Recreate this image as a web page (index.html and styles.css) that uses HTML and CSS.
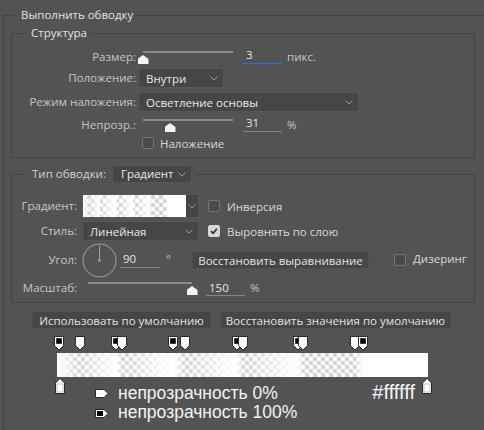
FILE: index.html
```html
<!DOCTYPE html>
<html lang="ru">
<head>
<meta charset="utf-8">
<title>Выполнить обводку</title>
<link rel="stylesheet" href="styles.css">
</head>
<body>
<fieldset class="outer">
  <legend class="outer-legend">Выполнить обводку</legend>

  <fieldset class="group group-structure">
    <legend class="group-legend">Структура</legend>

    <div class="row row-slider r1">
      <span class="lbl lbl-a">Размер:</span>
      <div class="slider slider-a"><span class="thumb" style="left:0%"></span></div>
      <span class="num num-a focused">3</span>
      <span class="unit">пикс.</span>
    </div>

    <div class="row row-select r2">
      <span class="lbl lbl-a">Положение:</span>
      <div class="select sel-pos"><span class="sel-text">Внутри</span><svg class="chev" viewBox="0 0 8 5"><polyline points="0.5,0.5 4,4 7.5,0.5"/></svg></div>
    </div>

    <div class="row row-select r3">
      <span class="lbl lbl-a">Режим наложения:</span>
      <div class="select sel-mode"><span class="sel-text">Осветление основы</span><svg class="chev" viewBox="0 0 8 5"><polyline points="0.5,0.5 4,4 7.5,0.5"/></svg></div>
    </div>

    <div class="row row-slider r4">
      <span class="lbl lbl-a">Непрозр.:</span>
      <div class="slider slider-a"><span class="thumb" style="left:30%"></span></div>
      <span class="num num-a">31</span>
      <span class="unit">%</span>
    </div>

    <div class="row row-check r5">
      <span class="lbl lbl-a"></span>
      <span class="check ck-overlay"></span>
      <span class="check-text">Наложение</span>
    </div>
  </fieldset>

  <fieldset class="group group-fill">
    <legend class="group-legend legend-fill">
      <span class="lbl-legend">Тип обводки:</span>
      <span class="select sel-type"><span class="sel-text">Градиент</span><svg class="chev" viewBox="0 0 8 5"><polyline points="0.5,0.5 4,4 7.5,0.5"/></svg></span>
    </legend>

    <div class="row row-grad">
      <span class="lbl lbl-b">Градиент:</span>
      <div class="select sel-grad"><span class="swatch grad-fill"></span><span class="swatch-btn"><svg class="chev" viewBox="0 0 8 5"><polyline points="0.5,0.5 4,4 7.5,0.5"/></svg></span></div>
      <span class="check ck-b"></span>
      <span class="check-text">Инверсия</span>
    </div>

    <div class="row row-style">
      <span class="lbl lbl-b">Стиль:</span>
      <div class="select sel-style"><span class="sel-text">Линейная</span><svg class="chev" viewBox="0 0 8 5"><polyline points="0.5,0.5 4,4 7.5,0.5"/></svg></div>
      <span class="check ck-b checked"><svg viewBox="0 0 12 12"><polyline points="2.5,6.2 5,8.7 9.5,3.2"/></svg></span>
      <span class="check-text">Выровнять по слою</span>
    </div>

    <div class="row row-angle">
      <span class="lbl lbl-b">Угол:</span>
      <svg class="dial" viewBox="0 0 35 35"><circle cx="17.5" cy="17.5" r="16.5"/><line x1="17.5" y1="17.5" x2="17.5" y2="2.5"/><circle class="dot" cx="17.5" cy="17.5" r="1.3"/></svg>
      <span class="num num-angle">90</span>
      <span class="deg">°</span>
      <span class="btn btn-align">Восстановить выравнивание</span>
      <span class="check ck-dither"></span>
      <span class="check-text">Дизеринг</span>
    </div>

    <div class="row row-slider row-scale">
      <span class="lbl lbl-b">Масштаб:</span>
      <div class="slider slider-b"><span class="thumb" style="left:100%"></span></div>
      <span class="num num-b">150</span>
      <span class="unit">%</span>
    </div>
  </fieldset>

  <div class="btn-row">
    <span class="btn btn-default">Использовать по умолчанию</span>
    <span class="btn btn-reset">Восстановить значения по умолчанию</span>
  </div>

  <div class="editor">
    <div class="stops-top">
      <svg class="stop-o black" style="left:-3px" viewBox="0 0 10 15"><path d="M0.5 0.5H9.5V9.5L5 14L0.5 9.5Z"/><rect x="2.2" y="2.2" width="5.6" height="5.6"/></svg>
      <svg class="stop-o" style="left:18px" viewBox="0 0 10 15"><path d="M0.5 0.5H9.5V9.5L5 14L0.5 9.5Z"/></svg>
      <svg class="stop-o black" style="left:54px" viewBox="0 0 10 15"><path d="M0.5 0.5H9.5V9.5L5 14L0.5 9.5Z"/><rect x="2.2" y="2.2" width="5.6" height="5.6"/></svg>
      <svg class="stop-o" style="left:60px" viewBox="0 0 10 15"><path d="M0.5 0.5H9.5V9.5L5 14L0.5 9.5Z"/></svg>
      <svg class="stop-o black" style="left:111px" viewBox="0 0 10 15"><path d="M0.5 0.5H9.5V9.5L5 14L0.5 9.5Z"/><rect x="2.2" y="2.2" width="5.6" height="5.6"/></svg>
      <svg class="stop-o" style="left:123px" viewBox="0 0 10 15"><path d="M0.5 0.5H9.5V9.5L5 14L0.5 9.5Z"/></svg>
      <svg class="stop-o black" style="left:175px" viewBox="0 0 10 15"><path d="M0.5 0.5H9.5V9.5L5 14L0.5 9.5Z"/><rect x="2.2" y="2.2" width="5.6" height="5.6"/></svg>
      <svg class="stop-o" style="left:181px" viewBox="0 0 10 15"><path d="M0.5 0.5H9.5V9.5L5 14L0.5 9.5Z"/></svg>
      <svg class="stop-o black" style="left:236px" viewBox="0 0 10 15"><path d="M0.5 0.5H9.5V9.5L5 14L0.5 9.5Z"/><rect x="2.2" y="2.2" width="5.6" height="5.6"/></svg>
      <svg class="stop-o" style="left:241px" viewBox="0 0 10 15"><path d="M0.5 0.5H9.5V9.5L5 14L0.5 9.5Z"/></svg>
      <svg class="stop-o" style="left:293px" viewBox="0 0 10 15"><path d="M0.5 0.5H9.5V9.5L5 14L0.5 9.5Z"/></svg>
      <svg class="stop-o black" style="left:301px" viewBox="0 0 10 15"><path d="M0.5 0.5H9.5V9.5L5 14L0.5 9.5Z"/><rect x="2.2" y="2.2" width="5.6" height="5.6"/></svg>
    </div>
    <div class="bar grad-fill"></div>
    <div class="below">
      <svg class="stop-c" style="left:-2px" viewBox="0 0 10 16"><path d="M0.5 5L5 0.5L9.5 5V15.5H0.5Z"/><rect x="2" y="6" width="6" height="8"/></svg>
      <svg class="stop-c" style="left:365px" viewBox="0 0 10 16"><path d="M0.5 5L5 0.5L9.5 5V15.5H0.5Z"/><rect x="2" y="6" width="6" height="8"/></svg>
      <div class="key key-1">
        <svg class="key-icon" viewBox="0 0 14 9"><path d="M0.5 0.5H9L13 4.5L9 8.5H0.5Z"/></svg>
        <span class="key-text">непрозрачность 0%</span>
        <span class="hex">#ffffff</span>
      </div>
      <div class="key key-2">
        <svg class="key-icon black" viewBox="0 0 14 9"><path d="M0.5 0.5H9L13 4.5L9 8.5H0.5Z"/><rect x="2" y="2" width="6" height="5"/></svg>
        <span class="key-text">непрозрачность 100%</span>
      </div>
    </div>
  </div>
</fieldset>
</body>
</html>
```

FILE: styles.css
```css
html, body {
  margin: 0;
  padding: 0;
}
body {
  width: 484px;
  height: 430px;
  overflow: hidden;
  background: #535353;
  font-family: "Open Sans", "Noto Sans", sans-serif;
  font-size: 11.5px;
  color: #d2d2d2;
}

/* ---------- fieldsets ---------- */
.outer {
  margin: 7px 0 0 3px;
  padding: 2px 0 0 7px;
  width: 481px;
  min-width: 0;
  box-sizing: border-box;
  border: 1px solid #424242;
  border-right: none;
  border-bottom: none;
  height: 423px;
}
.outer-legend {
  margin-left: 3px;
  padding: 0 3px 0 7px;
  line-height: 16px;
  color: #e2e2e2;
}
.group {
  margin: 0;
  padding: 0;
  width: 464px;
  min-width: 0;
  box-sizing: border-box;
  border: 1px solid #424242;
}
.group-legend {
  margin-left: 15px;
  padding: 0 4px;
  line-height: 16px;
  color: #e2e2e2;
}
.group-structure {
  padding-bottom: 6px;
}
.group-fill {
  margin-top: 7px;
  padding-bottom: 6px;
}
.legend-fill {
  margin-left: 13px;
  padding: 0 4px 0 7px;
  display: flex;
  align-items: center;
  height: 18px;
}
.lbl-legend {
  color: #d2d2d2;
}

/* ---------- rows ---------- */
.row {
  display: flex;
  align-items: center;
}
.lbl {
  flex: none;
  text-align: right;
  line-height: 20px;
  color: #c6c6c6;
}
.lbl-a { width: 124px; }
.lbl-b { width: 65px; }

.r1 { margin-top: 6px; height: 20px; }
.r2 { margin-top: 1px; height: 20px; }
.r3 { margin-top: 4px; height: 20px; }
.r4 { margin-top: 3px; height: 20px; }
.r5 { height: 16px; }

.row-slider { align-items: flex-start; }

/* slider */
.slider {
  position: relative;
  flex: none;
  height: 20px;
}
.slider::before {
  content: "";
  position: absolute;
  left: 0;
  right: 0;
  top: 4px;
  height: 2px;
  background: #8a8a8a;
}
.slider-a { width: 90px; margin-left: 7px; }
.slider-b { width: 104px; margin-left: 11px; height: 16px; }
.slider-b::before { top: 2px; }
.thumb {
  position: absolute;
  top: 8px;
  width: 11px;
  height: 9px;
  margin-left: -5.5px;
  background: #f4f4f4;
  clip-path: polygon(50% 0, 100% 45%, 100% 100%, 0 100%, 0 45%);
}
.slider-b .thumb { top: 6px; }

/* numeric field */
.num {
  flex: none;
  box-sizing: border-box;
  height: 17px;
  line-height: 16px;
  padding-left: 3px;
  border-bottom: 1px solid #858585;
  color: #e6e6e6;
}
.num.focused { border-bottom-color: #1a73e8; }
.num-a { width: 39px; margin-left: 10px; }
.num-b { width: 39px; margin-left: 14px; height: 16px; line-height: 15px; }
.unit {
  margin-left: 5px;
  line-height: 20px;
  color: #c6c6c6;
}
.row-scale .unit { line-height: 16px; }

/* select */
.select {
  box-sizing: border-box;
  display: flex;
  align-items: center;
  justify-content: space-between;
  background: #464646;
  border: 1px solid #575757;
  color: #e8e8e8;
  flex: none;
}
.sel-text { padding-left: 7px; }
.chev {
  width: 8px;
  height: 5px;
  margin-right: 5px;
  fill: none;
  stroke: #9c9c9c;
  stroke-width: 1;
}
.sel-pos { width: 86px; height: 20px; margin-left: 2px; }
.sel-mode { width: 221px; height: 20px; margin-left: 2px; }
.sel-type { width: 80px; height: 18px; margin-left: 6px; }
.sel-type .sel-text { padding-left: 8px; }
.sel-style { width: 117px; height: 20px; margin-left: 5px; }
.sel-grad { width: 117px; height: 24px; margin-left: 5px; padding: 0; }
.swatch {
  width: 103px;
  height: 22px;
}
.swatch-btn {
  flex: 1;
  height: 22px;
  display: flex;
  align-items: center;
  justify-content: center;
  background: #444444;
}
.swatch-btn .chev { margin-right: 0; }

/* checkbox */
.check {
  flex: none;
  box-sizing: border-box;
  width: 12px;
  height: 12px;
  border: 1px solid #777777;
  border-radius: 2px;
  background: #4a4a4a;
}
.check.checked {
  border-color: #d6d6d6;
  background: #d6d6d6;
  display: flex;
}
.check.checked svg {
  width: 10px;
  height: 10px;
  fill: none;
  stroke: #2e2e2e;
  stroke-width: 2;
}
.check-text {
  margin-left: 6px;
  color: #d8d8d8;
}
.ck-overlay { margin-left: 6px; }
.ck-b { margin-left: 9px; }
.row-grad .check-text, .row-style .check-text { margin-left: 7px; }

/* fill rows */
.row-grad { margin-top: 11px; height: 24px; }
.row-style { margin-top: 3px; height: 20px; }
.row-angle { margin-top: 2px; height: 35px; align-items: flex-start; }
.row-angle .lbl { margin-top: 7px; }
.row-scale { margin-top: 2px; height: 16px; }
.row-scale .lbl { line-height: 16px; }

.dial {
  flex: none;
  width: 35px;
  height: 35px;
  margin-left: 5px;
  fill: none;
  stroke: #a3a3a3;
  stroke-width: 1;
}
.dial .dot { fill: #a3a3a3; stroke: none; }
.num-angle { width: 40px; margin-left: 3px; margin-top: 8px; height: 17px; }
.deg {
  width: 26px;
  margin-left: 6px;
  margin-top: 10px;
  line-height: 12px;
  color: #c6c6c6;
}

.btn {
  box-sizing: border-box;
  display: flex;
  align-items: center;
  justify-content: center;
  height: 18px;
  background: #464646;
  border: 1px solid #4f4f4f;
  color: #e2e2e2;
  white-space: nowrap;
  flex: none;
}
.btn-align { width: 177px; margin-top: 8px; }
.ck-dither { margin-left: 25px; margin-top: 11px; }
.row-angle .check-text { margin-left: 7px; margin-top: 8px; line-height: 16px; }

/* default buttons */
.btn-row {
  display: flex;
  gap: 9px;
  margin: 8px 0 0 21px;
}
.btn-default { width: 179px; }
.btn-reset { width: 231px; }

/* gradient editor */
.editor {
  margin-left: 46px;
  width: 371px;
}
.stops-top {
  position: relative;
  height: 17px;
  margin-top: 7px;
}
.stop-o {
  position: absolute;
  top: 0;
  width: 10px;
  height: 15px;
}
.stop-o path {
  fill: #ffffff;
  stroke: #2a2a2a;
  stroke-width: 1;
}
.stop-o rect { fill: #000000; }

.bar {
  height: 24px;
}
.grad-fill {
  background:
    linear-gradient(to right,
      rgba(255,255,255,1) 0.5%, rgba(255,255,255,0) 6.2%,
      rgba(255,255,255,1) 15.9%, rgba(255,255,255,0) 17.5%,
      rgba(255,255,255,1) 31.3%, rgba(255,255,255,0) 34.5%,
      rgba(255,255,255,1) 48.5%, rgba(255,255,255,0) 50.1%,
      rgba(255,255,255,1) 65%, rgba(255,255,255,0) 66.3%,
      rgba(255,255,255,0) 80.3%, rgba(255,255,255,1) 82.5%),
    conic-gradient(#d3d3d3 25%, #ffffff 0 50%, #d3d3d3 0 75%, #ffffff 0) 0 0 / 8px 8px;
}

.below {
  position: relative;
  padding: 5px 0 0 38px;
}
.stop-c {
  position: absolute;
  top: 1px;
  width: 10px;
  height: 16px;
}
.stop-c path {
  fill: #ffffff;
  stroke: #2a2a2a;
  stroke-width: 1;
}
.stop-c rect {
  fill: #ffffff;
  stroke: #9a9a9a;
  stroke-width: 0.6;
}
.key {
  display: flex;
  align-items: baseline;
  height: 20px;
  font-family: "Liberation Sans", Arial, sans-serif;
  font-size: 17.5px;
  line-height: 20px;
  color: #f4f4f4;
}
.key-icon {
  width: 14px;
  height: 9px;
  margin-right: 9px;
  align-self: flex-end;
  margin-bottom: 4px;
}
.key-icon path {
  fill: #ffffff;
  stroke: #2a2a2a;
  stroke-width: 1;
}
.key-icon rect { fill: #000000; }
.hex {
  margin-left: auto;
  margin-right: 13px;
  font-size: 20px;
}
```
